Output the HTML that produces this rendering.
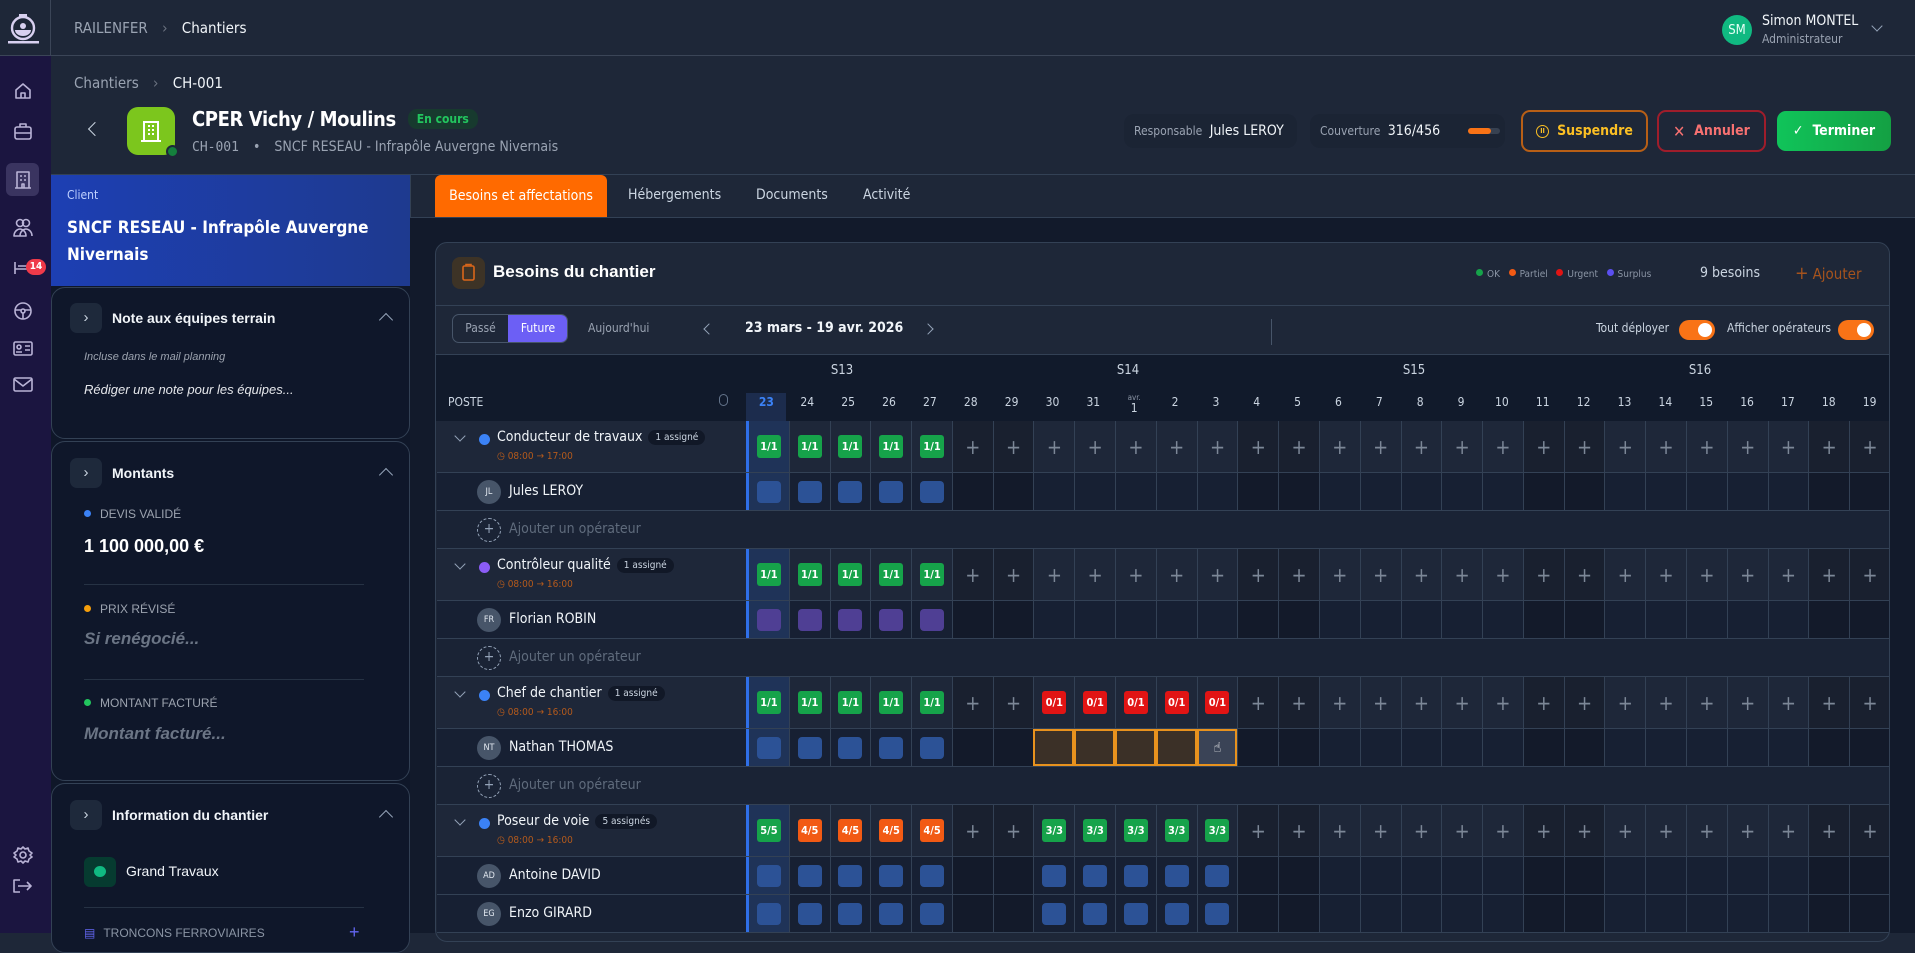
<!DOCTYPE html>
<html><head><meta charset="utf-8">
<style>
*{box-sizing:border-box;margin:0;padding:0}
i,b{font-style:normal}
body{width:1915px;height:933px;overflow:hidden;background:#1e2738;font-family:"DejaVu Sans Condensed","DejaVu Sans","Liberation Sans",sans-serif;font-stretch:condensed;color:#e5e7eb;position:relative}
.a{position:absolute}
.side{left:0;top:0;width:51px;height:933px;background:#1b1540}
.logo{left:0;top:0;width:51px;height:56px;background:#1e2738;border-right:1px solid #3b4557;border-bottom:1px solid #3b4557}
.top{left:51px;top:0;width:1864px;height:56px;background:#1e2738;border-bottom:1px solid #3b4557}
.lp{left:51px;top:175px;width:359px;height:758px;background:#0f1729}
.card{position:absolute;left:0;width:359px;border:1px solid #334155;border-radius:14px;background:#0f172a}
.lf{font-family:"Liberation Sans",sans-serif;font-stretch:normal}
.chb{position:absolute;left:18px;width:32px;height:30px;background:#1e293b;border-radius:7px;color:#cbd5e1;font-size:15px;text-align:center;line-height:30px}
.ct{position:absolute;left:60px;font-weight:bold;font-size:14px;color:#f1f5f9}
.up{position:absolute;right:18px;width:10px;height:10px;border-left:1.5px solid #94a3b8;border-top:1.5px solid #94a3b8;transform:rotate(45deg)}
.lbl{position:absolute;left:32px;font-size:12px;color:#9ca3af}
.dot{display:inline-block;width:7px;height:7px;border-radius:50%;margin-right:9px;position:relative;top:-1px}
.main{left:410px;top:217px;width:1505px;height:716px;background:#121a2b}
.bc{position:absolute;left:435px;top:242px;width:1455px;height:700px;background:#1e2738;border:1px solid #334155;border-radius:12px;overflow:hidden}
.row{position:absolute;left:1px;width:1453px;display:flex;border-bottom:1px solid #334155}
.lab{width:309px;flex:none;position:relative}
.c{flex:1;border-left:1px solid #334155;display:flex;align-items:center;justify-content:center;color:#7c8797;font-size:20px;font-weight:300}
.w{background:rgba(0,0,0,.16)}
.h{background:#1f3358;border-left:3px solid #2f6fe8}
.bd{width:24px;height:23px;border-radius:3px;color:#fff;font-size:11px;font-weight:bold;display:flex;align-items:center;justify-content:center}
.G{background:#16a34a}.R{background:#e11414}.O{background:#f25a14}
.sq{width:24px;height:22px;border-radius:4px;background:#2c5296}
.vq{width:24px;height:22px;border-radius:4px;background:#4f3f94}
.x{background:#3b3027;outline:2px solid #e8921e;outline-offset:-2px}
.gr{background:#1e2739;height:52px}
.pr{background:#172033;height:38px}
.ar{background:#1a2335;height:38px}
.gname{position:absolute;left:60px;top:8px;font-size:14px;color:#f1f5f9;white-space:nowrap}
.tag{display:inline-block;background:#111827;border-radius:9px;font-size:10px;color:#cbd5e1;padding:2px 7px;margin-left:6px;vertical-align:1px}
.time{position:absolute;left:60px;top:30px;font-size:10px;color:#b45a1c}
.gdot{position:absolute;left:42px;top:13px;width:11px;height:11px;border-radius:50%}
.gchev{position:absolute;left:19px;top:11px;width:8px;height:8px;border-right:1.5px solid #94a3b8;border-bottom:1.5px solid #94a3b8;transform:rotate(45deg)}
.av{position:absolute;left:40px;top:7px;width:24px;height:24px;border-radius:50%;background:#475569;color:#e2e8f0;font-size:9px;display:flex;align-items:center;justify-content:center}
.pn{position:absolute;left:72px;top:10px;font-size:14px;color:#f1f5f9}
.addc{position:absolute;left:40px;top:7px;width:24px;height:24px;border-radius:50%;border:1.5px dashed #94a3b8;color:#94a3b8;font-size:14px;text-align:center;line-height:20px}
.addt{position:absolute;left:72px;top:10px;font-size:14px;color:#5f6b7c}
.hd{position:absolute;font-size:13px;color:#cbd5e1;text-align:center}
.tg{position:absolute;width:36px;height:20px;border-radius:10px;background:#f97316}
.tg::after{content:"";position:absolute;right:3px;top:3px;width:14px;height:14px;border-radius:50%;background:#fff}
</style></head><body>
<div class="a side"></div>
<div class="a logo">
<svg width="51" height="56" viewBox="0 0 51 56"><g fill="none" stroke="#d8d0f0" stroke-width="2.4"><circle cx="23" cy="28" r="11"/></g><rect x="19" y="14" width="8" height="3" fill="#d8d0f0"/><circle cx="23" cy="26" r="3" fill="#d8d0f0"/><path d="M15 30h16a8 6 0 0 1-16 0z" fill="#d8d0f0"/><rect x="8" y="41" width="31" height="2.5" fill="#d8d0f0"/></svg>
</div>
<div class="a top">
<div class="a" style="left:23px;top:19px;font-size:15px;color:#9aa3b2">RAILENFER <span style="margin:0 10px;color:#6b7280">›</span> <span style="color:#f1f5f9">Chantiers</span></div>
<div class="a" style="left:1671px;top:15px;width:30px;height:30px;border-radius:50%;background:#10b981;color:#e6fff6;font-size:13px;display:flex;align-items:center;justify-content:center">SM</div>
<div class="a" style="left:1711px;top:13px;font-size:14px;color:#f1f5f9">Simon MONTEL</div>
<div class="a" style="left:1711px;top:32px;font-size:12px;color:#9aa3b2">Administrateur</div>
<div class="a" style="left:1822px;top:22px;width:8px;height:8px;border-right:1.5px solid #94a3b8;border-bottom:1.5px solid #94a3b8;transform:rotate(45deg)"></div>
</div>
<svg class="a" style="left:0;top:56px" width="51" height="877" viewBox="0 0 51 877"><g fill="none" stroke="#b9b3d6" stroke-width="1.6" stroke-linejoin="round">
<path d="M16 34l7-6 7 6v8h-14z M21 42v-5h4v5"/>
<rect x="15" y="71" width="16" height="12" rx="2"/><path d="M20 71v-3h6v3 M15 77h16"/>
<rect x="6" y="107" width="33" height="33" rx="6" fill="#3a3460" stroke="none"/><path d="M17 132v-16h12v16 M15 132h16 M20 120h2M24 120h2M20 124h2M24 124h2 M22 132v-4h2v4"/>
<circle cx="20" cy="167" r="3.5"/><circle cx="26" cy="167" r="3.5"/><path d="M14 180c0-5 4-7 6-7s6 2 6 7z M20 180c0-5 4-7 6-7s6 2 6 7"/>
<path d="M15 218v-12M15 213h16v5M18 210h10"/>
<circle cx="23" cy="255" r="8"/><circle cx="23" cy="255" r="2"/><path d="M15 254h6M25 254h6M23 257v6"/>
<rect x="14" y="286" width="18" height="13" rx="1.5"/><circle cx="19" cy="291" r="2"/><path d="M16 296h6M25 290h5M25 294h5"/>
<rect x="14" y="322" width="18" height="13" rx="1.5"/><path d="M14 323l9 7 9-7"/>
<circle cx="23" cy="799" r="3"/><path d="M23 791l2 2 3-1 1 3 3 2-2 2 2 2-3 2-1 3-3-1-2 2-2-2-3 1-1-3-3-2 2-2-2-2 3-2 1-3 3 1z"/>
<path d="M20 836h-6v-12h6 M18 830h13 M27 826l4 4-4 4"/>
</g></svg>
<div class="a" style="left:26px;top:259px;min-width:20px;height:16px;border-radius:8px;background:#ef3a4a;color:#fff;font-size:10px;font-weight:bold;text-align:center;line-height:16px">14</div>

<div class="a" style="left:74px;top:74px;font-size:15px;color:#9aa3b2">Chantiers <span style="margin:0 10px;color:#6b7280">›</span> <span style="color:#f1f5f9">CH-001</span></div>
<div class="a" style="left:90px;top:124px;width:10px;height:10px;border-left:1.8px solid #cbd5e1;border-bottom:1.8px solid #cbd5e1;transform:rotate(45deg)"></div>
<div class="a" style="left:127px;top:107px;width:48px;height:48px;border-radius:11px;background:#7cc61d">
<svg width="48" height="48" viewBox="0 0 48 48"><g fill="none" stroke="#fff" stroke-width="2"><path d="M17 34V15h14v19 M14 34h20"/><path d="M21 19h2M25 19h2M21 23h2M25 23h2M21 27h2M25 27h2"/></g></svg>
<div class="a" style="left:39px;top:38px;width:13px;height:13px;border-radius:50%;background:#15803d;border:2px solid #1e2738"></div></div>
<div class="a" style="left:192px;top:107px;font-size:20px;letter-spacing:-0.4px;font-weight:bold;color:#fff;white-space:nowrap">CPER Vichy / Moulins<span style="display:inline-block;margin-left:12px;padding:3px 9px;border-radius:9px;background:#173a2e;color:#22c55e;font-size:12px;letter-spacing:0;vertical-align:3px">En cours</span></div>
<div class="a" style="left:192px;top:139px;font-size:14px;color:#9aa3b2"><span style="font-family:'DejaVu Sans Mono','Liberation Mono',monospace;font-size:13px">CH-001</span><span style="margin:0 14px">•</span>SNCF RESEAU - Infrapôle Auvergne Nivernais</div>
<div class="a" style="left:1124px;top:114px;width:173px;height:34px;border-radius:10px;background:#1b2434;font-size:12px;color:#9aa3b2;padding:9px 10px">Responsable <span style="color:#f1f5f9;font-size:14px;margin-left:4px">Jules LEROY</span></div>
<div class="a" style="left:1310px;top:114px;width:195px;height:34px;border-radius:10px;background:#1b2434;font-size:12px;color:#9aa3b2;padding:9px 10px">Couverture <span style="color:#f1f5f9;font-size:14px;margin-left:4px">316/456</span><span class="a" style="left:158px;top:14px;width:32px;height:6px;border-radius:3px;background:#374151"><span class="a" style="left:0;top:0;width:23px;height:6px;border-radius:3px;background:#f97316"></span></span></div>
<div class="a" style="left:1521px;top:110px;width:127px;height:42px;border:2px solid #b85f16;border-radius:9px;color:#fbbf24;font-size:14px;font-weight:bold;display:flex;align-items:center;justify-content:center"><span style="display:inline-block;width:13px;height:13px;border:1.5px solid #fbbf24;border-radius:50%;margin-right:8px;font-size:7px;line-height:10px;text-align:center">II</span>Suspendre</div>
<div class="a" style="left:1657px;top:110px;width:109px;height:42px;border:2px solid #9f1d2b;border-radius:9px;color:#f87171;font-size:14px;font-weight:bold;display:flex;align-items:center;justify-content:center"><span style="margin-right:9px;font-weight:normal;font-size:16px">✕</span>Annuler</div>
<div class="a" style="left:1777px;top:111px;width:114px;height:40px;border-radius:9px;background:linear-gradient(90deg,#10c45a,#14a043);color:#fff;font-size:14px;font-weight:bold;display:flex;align-items:center;justify-content:center"><span style="margin-right:9px;font-weight:normal">✓</span>Terminer</div>
<div class="a" style="left:51px;top:174px;width:1864px;height:1px;background:#334155"></div>

<div class="a lp">
<div class="a" style="left:0;top:0;width:359px;height:111px;background:linear-gradient(90deg,#1d3fb3,#1e3a8f)">
<div class="a" style="left:16px;top:13px;font-size:12px;color:#bfd0ff">Client</div>
<div class="a" style="left:16px;top:40px;width:320px;font-size:17px;font-weight:bold;color:#fff;line-height:27px">SNCF RESEAU - Infrapôle Auvergne Nivernais</div></div>
<div class="card lf" style="top:112px;height:152px">
<div class="chb" style="top:15px">›</div><div class="ct" style="top:22px">Note aux équipes terrain</div><div class="up" style="top:27px"></div>
<div class="a" style="left:32px;top:63px;font-size:11px;font-style:italic;color:#9ca3af">Incluse dans le mail planning</div>
<div class="a" style="left:32px;top:94px;font-size:13px;font-style:italic;color:#e5e7eb">Rédiger une note pour les équipes...</div></div>
<div class="card lf" style="top:266px;height:340px">
<div class="chb" style="top:16px">›</div><div class="ct" style="top:23px">Montants</div><div class="up" style="top:28px"></div>
<div class="lbl" style="top:65px"><span class="dot" style="background:#3b82f6"></span>DEVIS VALIDÉ</div>
<div class="a" style="left:32px;top:94px;font-size:18px;font-weight:bold;color:#fff">1 100 000,00 €</div>
<div class="a" style="left:32px;top:142px;width:280px;height:1px;background:#263244"></div>
<div class="lbl" style="top:160px"><span class="dot" style="background:#f59e0b"></span>PRIX RÉVISÉ</div>
<div class="a" style="left:32px;top:187px;font-size:17px;font-weight:bold;font-style:italic;color:#6b7585">Si renégocié...</div>
<div class="a" style="left:32px;top:237px;width:280px;height:1px;background:#263244"></div>
<div class="lbl" style="top:254px"><span class="dot" style="background:#22c55e"></span>MONTANT FACTURÉ</div>
<div class="a" style="left:32px;top:282px;font-size:17px;font-weight:bold;font-style:italic;color:#6b7585">Montant facturé...</div></div>
<div class="card lf" style="top:608px;height:170px">
<div class="chb" style="top:16px">›</div><div class="ct" style="top:23px">Information du chantier</div><div class="up" style="top:28px"></div>
<div class="a" style="left:32px;top:73px;width:32px;height:30px;border-radius:6px;background:#063b30"><div class="a" style="left:10px;top:9px;width:12px;height:11px;border-radius:50%;background:#10b981"></div></div>
<div class="a" style="left:74px;top:79px;font-size:14px;color:#f1f5f9">Grand Travaux</div>
<div class="a" style="left:32px;top:123px;width:280px;height:1px;background:#263244"></div>
<div class="a" style="left:32px;top:142px;font-size:12px;color:#8b95a5"><span style="color:#6366f1;margin-right:8px">▤</span>TRONCONS FERROVIAIRES</div>
<div class="a" style="left:297px;top:138px;font-size:18px;color:#6366f1">+</div></div>
</div>
<div class="a" style="left:410px;top:175px;width:1px;height:758px;background:#334155"></div>

<div class="a" style="left:435px;top:175px;width:172px;height:42px;background:#ff6a00;border-radius:6px 6px 0 0;color:#fff;font-size:14px;text-align:center;line-height:42px">Besoins et affectations</div>
<div class="a" style="left:628px;top:187px;font-size:14px;color:#cbd5e1">Hébergements</div>
<div class="a" style="left:756px;top:187px;font-size:14px;color:#cbd5e1">Documents</div>
<div class="a" style="left:863px;top:187px;font-size:14px;color:#cbd5e1">Activité</div>
<div class="a main"></div>
<div class="a" style="left:410px;top:217px;width:1505px;height:1px;background:#334155"></div>

<div class="bc">
<div class="a" style="left:16px;top:14px;width:33px;height:32px;border-radius:8px;background:#3d3326"><svg width="33" height="32"><g fill="none" stroke="#d9661a" stroke-width="1.6"><rect x="11" y="9" width="11" height="14" rx="1.5"/><path d="M14 9v-1.5h5V9"/></g></svg></div>
<div class="a" style="left:57px;top:19px;font-size:17px;font-weight:bold;color:#fff;font-stretch:normal;font-family:'Liberation Sans',sans-serif">Besoins du chantier</div>
<div class="a" style="left:1040px;top:26px;font-size:10px;color:#8b95a5;white-space:nowrap"><span class="dot" style="background:#16a34a;margin-right:4px"></span>OK &nbsp;&nbsp;<span class="dot" style="background:#f25a14;margin-right:4px"></span>Partiel &nbsp;&nbsp;<span class="dot" style="background:#e11414;margin-right:4px"></span>Urgent &nbsp;&nbsp;<span class="dot" style="background:#5b4ff0;margin-right:4px"></span>Surplus</div>
<div class="a" style="left:1264px;top:22px;font-size:14px;color:#cbd5e1">9 besoins</div>
<div class="a" style="left:1359px;top:20px;font-size:15px;color:#a5531d"><span style="font-size:18px;margin-right:4px">+</span>Ajouter</div>
<div class="a" style="left:0;top:62px;width:1455px;height:1px;background:#334155"></div>
<div class="a" style="left:16px;top:71px;width:116px;height:29px;border:1px solid #475569;border-radius:7px;overflow:hidden;font-size:12px"><span class="a" style="left:0;top:0;width:55px;height:27px;text-align:center;line-height:27px;color:#9aa3b2">Passé</span><span class="a" style="left:55px;top:0;width:60px;height:27px;text-align:center;line-height:27px;color:#fff;background:#6c5ff5">Future</span></div>
<div class="a" style="left:152px;top:78px;font-size:12px;color:#9aa3b2">Aujourd'hui</div>
<div class="a" style="left:269px;top:82px;width:8px;height:8px;border-left:1.5px solid #94a3b8;border-bottom:1.5px solid #94a3b8;transform:rotate(45deg)"></div>
<div class="a" style="left:309px;top:77px;font-size:14px;font-weight:bold;color:#f1f5f9">23 mars - 19 avr. 2026</div>
<div class="a" style="left:488px;top:82px;width:8px;height:8px;border-right:1.5px solid #94a3b8;border-top:1.5px solid #94a3b8;transform:rotate(45deg)"></div>
<div class="a" style="left:835px;top:76px;width:1px;height:26px;background:#475569"></div>
<div class="a" style="left:1160px;top:78px;font-size:12px;color:#cbd5e1">Tout déployer</div>
<div class="tg" style="left:1243px;top:77px"></div>
<div class="a" style="left:1291px;top:78px;font-size:12px;color:#cbd5e1">Afficher opérateurs</div>
<div class="tg" style="left:1402px;top:77px"></div>
<div class="a" style="left:0;top:111px;width:1455px;height:1px;background:#334155"></div>
<div class="a" style="left:0;top:112px;width:1455px;height:66px;background:#111a2b"></div>
<div class="a" style="left:310px;top:150px;width:40px;height:28px;background:#1c2c4d"></div>
<div class="a" style="left:12px;top:152px;font-size:12px;color:#cbd5e1">POSTE</div>
<div class="a" style="left:283px;top:151px;width:9px;height:12px;border:1.3px solid #64748b;border-radius:5px"></div>
<div class="hd" style="left:263px;top:120px;width:286px">S13</div>
<div class="hd" style="left:549px;top:120px;width:286px">S14</div>
<div class="hd" style="left:835px;top:120px;width:286px">S15</div>
<div class="hd" style="left:1121px;top:120px;width:286px">S16</div>
<div class="a" style="left:310px;top:152px;width:1144px;display:flex;font-size:12px;color:#cbd5e1;text-align:center">
<span style="flex:1;color:#3b82f6;font-weight:bold">23</span><span style="flex:1">24</span><span style="flex:1">25</span><span style="flex:1">26</span><span style="flex:1">27</span><span style="flex:1">28</span><span style="flex:1">29</span><span style="flex:1">30</span><span style="flex:1">31</span><span style="flex:1;position:relative;top:-4px;line-height:10px"><span style="font-size:8px;color:#8b95a5">avr.</span><br>1</span><span style="flex:1">2</span><span style="flex:1">3</span><span style="flex:1">4</span><span style="flex:1">5</span><span style="flex:1">6</span><span style="flex:1">7</span><span style="flex:1">8</span><span style="flex:1">9</span><span style="flex:1">10</span><span style="flex:1">11</span><span style="flex:1">12</span><span style="flex:1">13</span><span style="flex:1">14</span><span style="flex:1">15</span><span style="flex:1">16</span><span style="flex:1">17</span><span style="flex:1">18</span><span style="flex:1">19</span></div>

<div class="row gr" style="top:178px"><div class="lab"><div class="gchev"></div><div class="gdot" style="background:#3b82f6"></div><div class="gname">Conducteur de travaux<span class="tag">1 assigné</span></div><div class="time">◷ 08:00 → 17:00</div></div>
<i class="c h"><b class="bd G">1/1</b></i><i class="c"><b class="bd G">1/1</b></i><i class="c"><b class="bd G">1/1</b></i><i class="c"><b class="bd G">1/1</b></i><i class="c"><b class="bd G">1/1</b></i><i class="c w">+</i><i class="c w">+</i><i class="c">+</i><i class="c">+</i><i class="c">+</i><i class="c">+</i><i class="c">+</i><i class="c w">+</i><i class="c w">+</i><i class="c">+</i><i class="c">+</i><i class="c">+</i><i class="c">+</i><i class="c">+</i><i class="c w">+</i><i class="c w">+</i><i class="c">+</i><i class="c">+</i><i class="c">+</i><i class="c">+</i><i class="c">+</i><i class="c w">+</i><i class="c w">+</i></div>
<div class="row pr" style="top:230px"><div class="lab"><div class="av">JL</div><div class="pn">Jules LEROY</div></div>
<i class="c h"><b class="sq"></b></i><i class="c"><b class="sq"></b></i><i class="c"><b class="sq"></b></i><i class="c"><b class="sq"></b></i><i class="c"><b class="sq"></b></i><i class="c w"></i><i class="c w"></i><i class="c"></i><i class="c"></i><i class="c"></i><i class="c"></i><i class="c"></i><i class="c w"></i><i class="c w"></i><i class="c"></i><i class="c"></i><i class="c"></i><i class="c"></i><i class="c"></i><i class="c w"></i><i class="c w"></i><i class="c"></i><i class="c"></i><i class="c"></i><i class="c"></i><i class="c"></i><i class="c w"></i><i class="c w"></i></div>
<div class="row ar" style="top:268px"><div class="lab"><div class="addc">+</div><div class="addt">Ajouter un opérateur</div></div></div>

<div class="row gr" style="top:306px"><div class="lab"><div class="gchev"></div><div class="gdot" style="background:#8b5cf6"></div><div class="gname">Contrôleur qualité<span class="tag">1 assigné</span></div><div class="time">◷ 08:00 → 16:00</div></div>
<i class="c h"><b class="bd G">1/1</b></i><i class="c"><b class="bd G">1/1</b></i><i class="c"><b class="bd G">1/1</b></i><i class="c"><b class="bd G">1/1</b></i><i class="c"><b class="bd G">1/1</b></i><i class="c w">+</i><i class="c w">+</i><i class="c">+</i><i class="c">+</i><i class="c">+</i><i class="c">+</i><i class="c">+</i><i class="c w">+</i><i class="c w">+</i><i class="c">+</i><i class="c">+</i><i class="c">+</i><i class="c">+</i><i class="c">+</i><i class="c w">+</i><i class="c w">+</i><i class="c">+</i><i class="c">+</i><i class="c">+</i><i class="c">+</i><i class="c">+</i><i class="c w">+</i><i class="c w">+</i></div>
<div class="row pr" style="top:358px"><div class="lab"><div class="av">FR</div><div class="pn">Florian ROBIN</div></div>
<i class="c h"><b class="vq"></b></i><i class="c"><b class="vq"></b></i><i class="c"><b class="vq"></b></i><i class="c"><b class="vq"></b></i><i class="c"><b class="vq"></b></i><i class="c w"></i><i class="c w"></i><i class="c"></i><i class="c"></i><i class="c"></i><i class="c"></i><i class="c"></i><i class="c w"></i><i class="c w"></i><i class="c"></i><i class="c"></i><i class="c"></i><i class="c"></i><i class="c"></i><i class="c w"></i><i class="c w"></i><i class="c"></i><i class="c"></i><i class="c"></i><i class="c"></i><i class="c"></i><i class="c w"></i><i class="c w"></i></div>
<div class="row ar" style="top:396px"><div class="lab"><div class="addc">+</div><div class="addt">Ajouter un opérateur</div></div></div>

<div class="row gr" style="top:434px"><div class="lab"><div class="gchev"></div><div class="gdot" style="background:#3b82f6"></div><div class="gname">Chef de chantier<span class="tag">1 assigné</span></div><div class="time">◷ 08:00 → 16:00</div></div>
<i class="c h"><b class="bd G">1/1</b></i><i class="c"><b class="bd G">1/1</b></i><i class="c"><b class="bd G">1/1</b></i><i class="c"><b class="bd G">1/1</b></i><i class="c"><b class="bd G">1/1</b></i><i class="c w">+</i><i class="c w">+</i><i class="c"><b class="bd R">0/1</b></i><i class="c"><b class="bd R">0/1</b></i><i class="c"><b class="bd R">0/1</b></i><i class="c"><b class="bd R">0/1</b></i><i class="c"><b class="bd R">0/1</b></i><i class="c w">+</i><i class="c w">+</i><i class="c">+</i><i class="c">+</i><i class="c">+</i><i class="c">+</i><i class="c">+</i><i class="c w">+</i><i class="c w">+</i><i class="c">+</i><i class="c">+</i><i class="c">+</i><i class="c">+</i><i class="c">+</i><i class="c w">+</i><i class="c w">+</i></div>
<div class="row pr" style="top:486px"><div class="lab"><div class="av">NT</div><div class="pn">Nathan THOMAS</div></div>
<i class="c h"><b class="sq"></b></i><i class="c"><b class="sq"></b></i><i class="c"><b class="sq"></b></i><i class="c"><b class="sq"></b></i><i class="c"><b class="sq"></b></i><i class="c w"></i><i class="c w"></i><i class="c x"></i><i class="c x"></i><i class="c x"></i><i class="c x"></i><i class="c x" style="background:#3a4356;color:#fff;font-size:14px">☝</i><i class="c w"></i><i class="c w"></i><i class="c"></i><i class="c"></i><i class="c"></i><i class="c"></i><i class="c"></i><i class="c w"></i><i class="c w"></i><i class="c"></i><i class="c"></i><i class="c"></i><i class="c"></i><i class="c"></i><i class="c w"></i><i class="c w"></i></div>
<div class="row ar" style="top:524px"><div class="lab"><div class="addc">+</div><div class="addt">Ajouter un opérateur</div></div></div>

<div class="row gr" style="top:562px"><div class="lab"><div class="gchev"></div><div class="gdot" style="background:#3b82f6"></div><div class="gname">Poseur de voie<span class="tag">5 assignés</span></div><div class="time">◷ 08:00 → 16:00</div></div>
<i class="c h"><b class="bd G">5/5</b></i><i class="c"><b class="bd O">4/5</b></i><i class="c"><b class="bd O">4/5</b></i><i class="c"><b class="bd O">4/5</b></i><i class="c"><b class="bd O">4/5</b></i><i class="c w">+</i><i class="c w">+</i><i class="c"><b class="bd G">3/3</b></i><i class="c"><b class="bd G">3/3</b></i><i class="c"><b class="bd G">3/3</b></i><i class="c"><b class="bd G">3/3</b></i><i class="c"><b class="bd G">3/3</b></i><i class="c w">+</i><i class="c w">+</i><i class="c">+</i><i class="c">+</i><i class="c">+</i><i class="c">+</i><i class="c">+</i><i class="c w">+</i><i class="c w">+</i><i class="c">+</i><i class="c">+</i><i class="c">+</i><i class="c">+</i><i class="c">+</i><i class="c w">+</i><i class="c w">+</i></div>
<div class="row pr" style="top:614px"><div class="lab"><div class="av">AD</div><div class="pn">Antoine DAVID</div></div>
<i class="c h"><b class="sq"></b></i><i class="c"><b class="sq"></b></i><i class="c"><b class="sq"></b></i><i class="c"><b class="sq"></b></i><i class="c"><b class="sq"></b></i><i class="c w"></i><i class="c w"></i><i class="c"><b class="sq"></b></i><i class="c"><b class="sq"></b></i><i class="c"><b class="sq"></b></i><i class="c"><b class="sq"></b></i><i class="c"><b class="sq"></b></i><i class="c w"></i><i class="c w"></i><i class="c"></i><i class="c"></i><i class="c"></i><i class="c"></i><i class="c"></i><i class="c w"></i><i class="c w"></i><i class="c"></i><i class="c"></i><i class="c"></i><i class="c"></i><i class="c"></i><i class="c w"></i><i class="c w"></i></div>
<div class="row pr" style="top:652px"><div class="lab"><div class="av">EG</div><div class="pn">Enzo GIRARD</div></div>
<i class="c h"><b class="sq"></b></i><i class="c"><b class="sq"></b></i><i class="c"><b class="sq"></b></i><i class="c"><b class="sq"></b></i><i class="c"><b class="sq"></b></i><i class="c w"></i><i class="c w"></i><i class="c"><b class="sq"></b></i><i class="c"><b class="sq"></b></i><i class="c"><b class="sq"></b></i><i class="c"><b class="sq"></b></i><i class="c"><b class="sq"></b></i><i class="c w"></i><i class="c w"></i><i class="c"></i><i class="c"></i><i class="c"></i><i class="c"></i><i class="c"></i><i class="c w"></i><i class="c w"></i><i class="c"></i><i class="c"></i><i class="c"></i><i class="c"></i><i class="c"></i><i class="c w"></i><i class="c w"></i></div>
</div>
</body></html>
